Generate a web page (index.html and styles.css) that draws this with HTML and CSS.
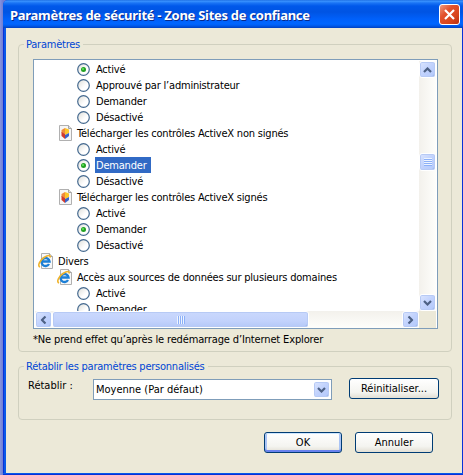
FILE: index.html
```html
<!DOCTYPE html>
<html lang="fr">
<head>
    <meta charset="UTF-8">
    <title>Paramètres de sécurité - Zone Sites de confiance</title>
    <link rel="stylesheet" href="styles.css">
</head>
<body>
    <svg class="defs">
        <defs>
            <linearGradient id="dot" x1="0" y1="0" x2="1" y2="1">
                <stop offset="0" stop-color="#dcdcd7"/>
                <stop offset=".6" stop-color="#ffffff"/>
            </linearGradient>
        </defs>
        <symbol id="radio" viewBox="0 0 13 13">
            <circle cx="6.5" cy="6.5" r="5.8" fill="url(#dot)" stroke="#44698f" stroke-width="1.2"/>
        </symbol>
        <symbol id="radio-on" viewBox="0 0 13 13">
            <circle cx="6.5" cy="6.5" r="5.8" fill="url(#dot)" stroke="#44698f" stroke-width="1.2"/>
            <circle cx="6.5" cy="6.5" r="2.5" fill="#21a121"/>
            <path d="M5 5h2v2H5z" fill="#55d551"/>
        </symbol>
        <symbol id="page" viewBox="0 0 14 16">
            <path d="M.5 .5h9l3 3v12H.5z" fill="#f6f6f6" stroke="#b0b0b0"/>
            <path d="M9.500.5v3h3" fill="#ddd" stroke="#a5a5a5"/>
            <path d="M2.500 5L6 3v6l-3.500-1z" fill="#f08a3c"/>
            <path d="M6 3l4 1.500V8L6 10z" fill="#fcc52a"/>
            <path d="M2.500 7L6 9v5l-3.500-3z" fill="#d23a2c"/>
            <path d="M6 10l4-2v3l-4 3z" fill="#3a63c8"/>
        </symbol>
        <symbol id="ie" viewBox="0 0 16 16">
            <path d="M3.500.5h8l3 3v12h-11z" fill="#f8f8f8" stroke="#b0b0b0"/>
            <path d="M11.500.5v3h3" fill="#ddd" stroke="#a5a5a5"/>
            <path d="M11 11A4 4 0 1 1 11.500 8.500H4.500" fill="none" stroke="#1c7fd6" stroke-width="2.400"/>
            <path d="M2 14C-1 13 2 7 6 4.500S13 1.500 12 4.500" fill="none" stroke="#efb32c" stroke-width="1.600"/>
        </symbol>
        <symbol id="chevron" viewBox="0 0 9 6">
            <path d="M1 1l3.500 3.500L8 1" fill="none" stroke="#4d6185" stroke-width="2.200"/>
        </symbol>
    </svg>

    <div class="window">
        <div class="titlebar">
            <h1>Paramètres de sécurité - Zone Sites de confiance</h1>
            <button class="close">
                <svg width="11" height="11" viewBox="0 0 11 11"><path d="M1 1l9 9M10 1l-9 9" stroke="#fff" stroke-width="2.200"/></svg>
            </button>
        </div>

        <div class="client">
            <fieldset class="settings">
                <legend>Paramètres</legend>
                <div class="listbox">
                    <ul class="tree">
                        <li class="option"><svg><use href="#radio-on"/></svg><span>Activé</span></li>
                        <li class="option"><svg><use href="#radio"/></svg><span>Approuvé par l’administrateur</span></li>
                        <li class="option"><svg><use href="#radio"/></svg><span>Demander</span></li>
                        <li class="option"><svg><use href="#radio"/></svg><span>Désactivé</span></li>
                        <li class="item"><svg class="page"><use href="#page"/></svg><span>Télécharger les contrôles ActiveX non signés</span></li>
                        <li class="option"><svg><use href="#radio"/></svg><span>Activé</span></li>
                        <li class="option"><svg><use href="#radio-on"/></svg><span class="selected">Demander</span></li>
                        <li class="option"><svg><use href="#radio"/></svg><span>Désactivé</span></li>
                        <li class="item"><svg class="page"><use href="#page"/></svg><span>Télécharger les contrôles ActiveX signés</span></li>
                        <li class="option"><svg><use href="#radio"/></svg><span>Activé</span></li>
                        <li class="option"><svg><use href="#radio-on"/></svg><span>Demander</span></li>
                        <li class="option"><svg><use href="#radio"/></svg><span>Désactivé</span></li>
                        <li class="group"><svg class="ie"><use href="#ie"/></svg><span>Divers</span></li>
                        <li class="item"><svg class="ie"><use href="#ie"/></svg><span>Accès aux sources de données sur plusieurs domaines</span></li>
                        <li class="option"><svg><use href="#radio"/></svg><span>Activé</span></li>
                        <li class="option"><svg><use href="#radio"/></svg><span>Demander</span></li>
                    </ul>
                    <div class="vscroll">
                        <div class="arrow up"><svg><use href="#chevron"/></svg></div>
                        <div class="thumb"><i></i></div>
                        <div class="arrow down"><svg><use href="#chevron"/></svg></div>
                    </div>
                    <div class="hscroll">
                        <div class="arrow left"><svg><use href="#chevron"/></svg></div>
                        <div class="thumb"><i></i></div>
                        <div class="arrow right"><svg><use href="#chevron"/></svg></div>
                    </div>
                    <div class="corner"></div>
                </div>
                <p class="note">*Ne prend effet qu’après le redémarrage d’Internet Explorer</p>
            </fieldset>

            <fieldset class="reset">
                <legend>Rétablir les paramètres personnalisés</legend>
                <div class="row">
                    <label>Rétablir :</label>
                    <div class="combo">
                        <span>Moyenne (Par défaut)</span>
                        <div class="arrow"><svg><use href="#chevron"/></svg></div>
                    </div>
                    <button class="btn wide">Réinitialiser...</button>
                </div>
            </fieldset>

            <div class="buttons">
                <button class="btn default">OK</button>
                <button class="btn">Annuler</button>
            </div>
        </div>
    </div>
</body>
</html>
```

FILE: styles.css
```css
* {
    box-sizing: border-box;
}
body {
    margin: 0;
    height: 475px;
    overflow: hidden;
    background: linear-gradient(to right, #8592e0, #6f7dd3 3px);
    font: 11px/14px "DejaVu Sans Condensed", Tahoma, sans-serif;
    color: #000;
}
.defs {
    position: absolute;
    width: 0;
    height: 0;
}
.window {
    display: flex;
    flex-direction: column;
    height: 475px;
    margin-left: 3px;
    background: #0831d9;
    border-radius: 5px 0 0 0;
}

/* title bar */
.titlebar {
    display: flex;
    align-items: center;
    justify-content: space-between;
    height: 28px;
    padding: 1px 3px 0 7px;
    border-radius: 5px 0 0 0;
    background: linear-gradient(#1464dc 0, #3d95ff 1px, #1a74f5 3px, #0058ea 6px, #0054e3 12px, #0060fa 19px, #0066ff 24px, #0058e8 26px, #0040c0 28px);
}
.titlebar h1 {
    margin: 0;
    font: bold 13px/18px "Noto Sans", sans-serif;
    letter-spacing: -0.28px;
    color: #fff;
    text-shadow: 1px 1px #0a2a8a;
    white-space: nowrap;
}
.close {
    display: flex;
    align-items: center;
    justify-content: center;
    width: 21px;
    height: 21px;
    padding: 0;
    border: 1px solid #fff;
    border-radius: 3px;
    background: linear-gradient(135deg, #ee9a80, #e2512c 35%, #d8451c 70%, #b93010);
}

.client {
    height: 445px;
    margin: 0 1px 0 1px;
    padding: 9px 0 0 12px;
    border-left: 2px solid #0958e8;
    background: #ece9d8;
}
.window::after {
    content: "";
    height: 1px;
    background: #0958e8;
}
fieldset {
    width: 434px;
    margin: 0;
    border: 1px solid #d0d0bf;
    border-radius: 4px;
}
legend {
    height: 15px;
    margin-left: -4px;
    padding: 0 3px 0 2px;
    line-height: 15px;
    letter-spacing: -0.23px;
    color: #0046d5;
    white-space: nowrap;
}
.settings {
    height: 315px;
    padding: 7px 10px 0 14px;
}
.settings legend {
    margin-left: -9px;
}
.listbox {
    display: grid;
    grid-template-columns: 1fr 17px;
    grid-template-rows: 1fr 17px;
    width: 405px;
    height: 270px;
    border: 1px solid #7f9db9;
    padding: 1px;
    background: #fff;
}

/* tree */
.tree {
    margin: 0;
    padding: 0;
    height: 250px;
    overflow: hidden;
    list-style: none;
}
.tree li {
    display: flex;
    align-items: center;
    height: 16px;
    white-space: nowrap;
}
.tree span {
    height: 16px;
    padding: 0 1px;
    line-height: 18px;
    letter-spacing: -0.2px;
}
.tree svg {
    flex: none;
    width: 13px;
    height: 13px;
}
.tree .page {
    width: 14px;
    height: 16px;
    margin-right: 3px;
}
.tree .ie {
    width: 16px;
    height: 16px;
    margin-right: 3px;
}
.option {
    padding-left: 42px;
}
.option svg {
    margin-right: 5px;
}
.item {
    padding-left: 24px;
}
.item .ie {
    margin-left: -2px;
}
.group {
    padding-left: 3px;
}
.tree .selected {
    width: 56px;
    background: #316ac5;
    color: #fff;
}

/* scrollbars */
.vscroll,
.hscroll {
    display: flex;
    background: linear-gradient(to right, #f3f1ec, #fefefb);
}
.vscroll {
    flex-direction: column;
}
.hscroll {
    background: linear-gradient(#f3f1ec, #fefefb);
}
.corner {
    background: #ece9d8;
}
.arrow,
.thumb {
    display: flex;
    align-items: center;
    justify-content: center;
    flex: none;
    width: 17px;
    height: 17px;
    border: 1px solid #fff;
    border-radius: 3px;
    background: linear-gradient(135deg, #dbe5fe, #c1d2fd 50%, #b2c8fb);
    box-shadow: inset 0 0 0 1px #b7caf5, inset -1px -1px #92aee0;
}
.arrow svg {
    width: 9px;
    height: 6px;
}
.up svg {
    transform: rotate(180deg);
}
.left svg {
    transform: rotate(90deg);
}
.right svg {
    transform: rotate(-90deg);
}
.down {
    margin-top: auto;
}
.right {
    margin-left: auto;
}
.vscroll .thumb {
    height: 18px;
    margin-top: 75px;
}
.hscroll .thumb {
    width: 257px;
    background: linear-gradient(#cad8fd, #c2d2fc 60%, #b4c8f8);
}
.thumb i {
    width: 8px;
    height: 8px;
    background: repeating-linear-gradient(#eef4fe 0 1px, #8cb0f8 1px 2px);
}
.hscroll .thumb i {
    background: repeating-linear-gradient(to right, #eef4fe 0 1px, #8cb0f8 1px 2px);
}
.note {
    margin: 4px 0 0;
    letter-spacing: -0.14px;
    white-space: nowrap;
}

/* reset */
.reset {
    height: 61px;
    margin-top: 7px;
    padding: 4px 9px 0;
}
.row {
    display: flex;
    align-items: flex-start;
}
.row label {
    width: 65px;
    padding-top: 1px;
}
.combo {
    display: flex;
    align-items: center;
    justify-content: space-between;
    width: 239px;
    height: 21px;
    margin: 1px 17px 0 0;
    padding: 1px 1px 1px 2px;
    border: 1px solid #7f9db9;
    background: #fff;
}
.combo span {
    padding-top: 1px;
}
.btn {
    width: 78px;
    height: 21px;
    padding: 0;
    border: 1px solid #003c74;
    border-radius: 3px;
    background: linear-gradient(#fff, #f4f4f0 70%, #e2dfd4);
    font: inherit;
    color: #000;
}
.wide {
    width: 90px;
}
.default {
    box-shadow: inset 0 1px #cee7ff, inset 0 -2px #6982ee, inset 2px 0 #aac4f5, inset -2px 0 #aac4f5;
}
.buttons {
    display: flex;
    gap: 13px;
    margin: 12px 0 0 246px;
}
```
